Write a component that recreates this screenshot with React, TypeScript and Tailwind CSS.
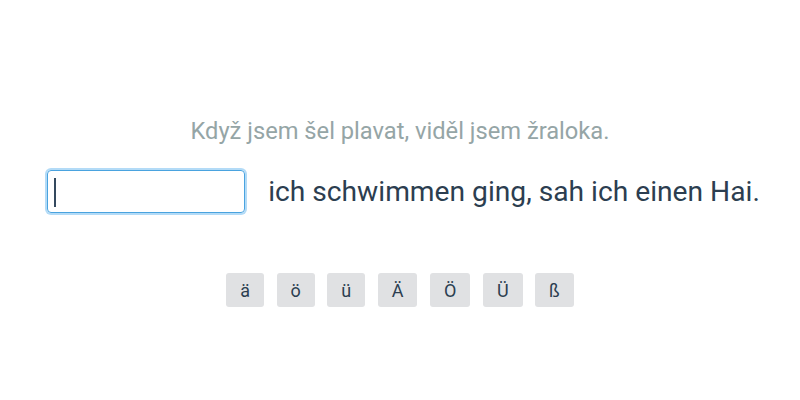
import { useState } from "react";

const letters = ["ä", "ö", "ü", "Ä", "Ö", "Ü", "ß"];

const App = () => {
  const [answer, setAnswer] = useState("");

  return (
    <div className="w-[800px] h-[400px] bg-white flex flex-col items-center font-['Roboto',sans-serif]">
      {/* Prompt */}
      <p className="mt-[114px] text-[23.7px] leading-[34px] text-[#95a5a6]">
        Když jsem šel plavat, viděl jsem žraloka.
      </p>

      {/* Sentence with blank */}
      <div className="mt-[22px] flex items-center gap-[23px] pl-[7px]">
        <div className="relative">
          <input
            autoFocus
            value={answer}
            onChange={(e) => setAnswer(e.target.value)}
            className="block w-[198px] h-[43px] px-[6px] rounded-[4px] border border-[#4aa3df] ring-2 ring-[#b3dbf7] outline-none text-[24px] text-[#2c3e50] caret-[#2c3e50]"
          />
          {answer === "" && (
            <span className="absolute left-[7px] top-[8px] w-[1.5px] h-[29px] bg-[#34495e]" />
          )}
        </div>
        <span className="text-[28.2px] leading-[36px] text-[#2c3e50]">
          ich schwimmen ging, sah ich einen Hai.
        </span>
      </div>

      {/* Special characters */}
      <div className="mt-[60px] flex gap-[12.5px]">
        {letters.map((l) => (
          <button
            key={l}
            onClick={() => setAnswer(answer + l)}
            className="h-[34px] px-[14px] rounded-[3px] bg-[#e0e1e3] text-[18px] text-[#2c3e50]"
          >
            {l}
          </button>
        ))}
      </div>
    </div>
  );
};

export default App;
